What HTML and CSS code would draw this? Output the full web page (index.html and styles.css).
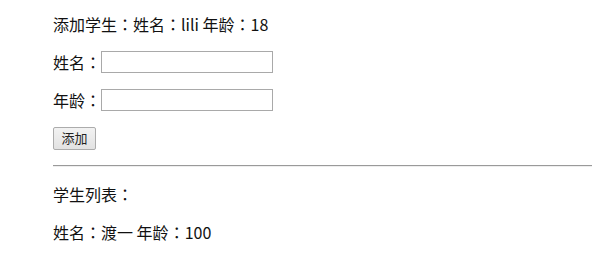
FILE: index.html
```html
<!DOCTYPE html>
<html lang="zh-CN">
<head>
<meta charset="utf-8">
<title>学生</title>
<link rel="stylesheet" href="styles.css">
</head>
<body>
<div class="app">
  <p class="row first">添加学生<span class="colon">：</span>姓名<span class="colon">：</span>lili 年龄<span class="colon">：</span>18</p>
  <p class="row">姓名<span class="colon">：</span><input class="field" type="text"></p>
  <p class="row">年龄<span class="colon">：</span><input class="field" type="text"></p>
  <p class="row"><button class="btn" type="button">添加</button></p>
  <hr class="rule">
  <p class="row">学生列表<span class="colon">：</span></p>
  <p class="row">姓名<span class="colon">：</span>渡一&nbsp;年龄<span class="colon">：</span>100</p>
</div>
</body>
</html>
```
FILE: styles.css
```css
html, body {
  margin: 0;
  padding: 0;
  background: #fff;
}
.app {
  padding: 13px 0 0 53px;
  font-family: "Noto Sans CJK SC", "Noto Sans", sans-serif;
  font-size: 16px;
  color: #111;
}
.row {
  margin: 16px 0;
  line-height: 22px;
  height: 22px;
  display: flex;
  align-items: center;
  white-space: pre;
}
.row.first {
  margin-top: 0;
}
.colon {
  font-family: "Noto Sans CJK TC", "Noto Sans CJK SC", sans-serif;
}
.field {
  box-sizing: border-box;
  width: 172px;
  height: 22px;
  margin: 0;
  padding: 1px 2px;
  border: 1px solid #a9a9a9;
  background: #fff;
  font-size: 13px;
}
.btn {
  box-sizing: border-box;
  height: 23px;
  width: 43px;
  margin: 0;
  padding: 0;
  border: 1px solid #acacac;
  border-radius: 2px;
  background: linear-gradient(#f2f2f2, #e2e2e2);
  font-family: "Noto Sans CJK SC", sans-serif;
  font-size: 13px;
  color: #222;
  line-height: 20px;
}
.rule {
  margin: 0;
  border: 0;
  border-top: 1px solid #9a9a9a;
  border-bottom: 1px solid #eee;
  height: 0;
}
```
